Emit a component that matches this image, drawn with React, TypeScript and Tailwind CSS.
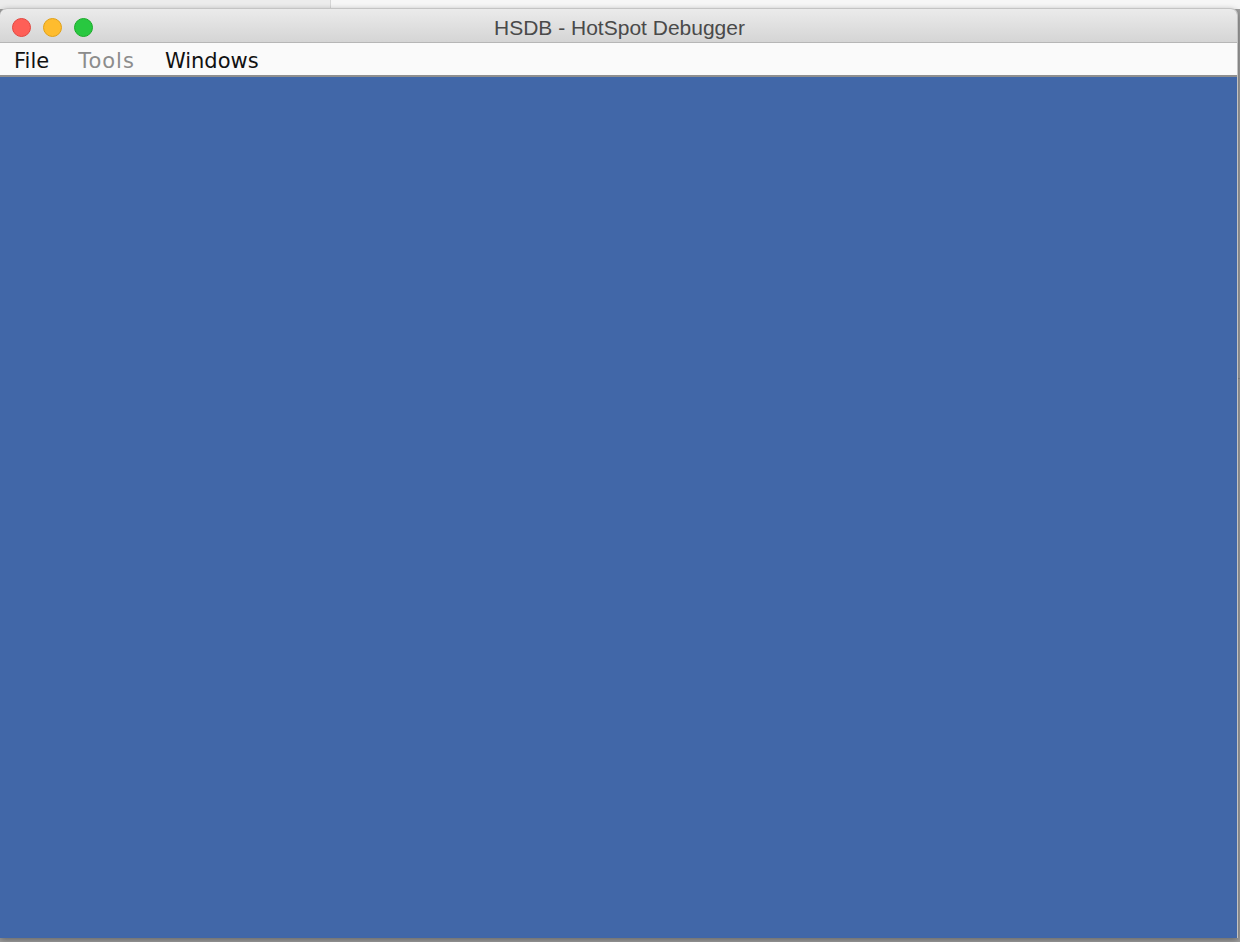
import React from 'react';

// Traffic-light buttons in the window title bar
const lights = [
  { fill: 'bg-[#fe5f57]', ring: 'border-[#e2463f]' },
  { fill: 'bg-[#febc2e]', ring: 'border-[#e1a116]' },
  { fill: 'bg-[#28c840]', ring: 'border-[#1aab29]' },
];

export default function App() {
  return (
    <div className="relative w-[1240px] h-[942px] overflow-hidden bg-[#9e9e9e] font-['Liberation_Sans',sans-serif]">
      {/* Desktop behind the window */}
      <div className="flex h-[9px]">
        <div className="w-[331px] bg-[#ececec] border-r border-[#d6d6d6]" />
        <div className="flex-1 bg-[#f6f6f6]" />
      </div>
      <div className="absolute right-0 top-[378px] w-[3px] h-[1px] bg-[#8a8a8a]" />

      {/* Window */}
      <div className="absolute left-0 top-[8px] w-[1238px] h-[930px] flex flex-col rounded-t-[7px] border-r border-t border-[#c4c4c4] overflow-hidden shadow-[0_2px_6px_rgba(0,0,0,0.35)]">
        {/* Title bar */}
        <div className="relative h-[34px] flex items-center bg-gradient-to-b from-[#ebebeb] to-[#d5d5d5] border-b border-[#b6b6b6]">
          <div className="flex items-center gap-[12px] pl-[12px] pt-[3px]">
            {lights.map((l, i) => (
              <span key={i} className={`w-[19px] h-[19px] rounded-full border ${l.fill} ${l.ring}`} />
            ))}
          </div>
          <div className="absolute inset-0 flex items-center justify-center text-[21px] text-[#4a4a4a] pt-[4px] pl-[2px]">
            HSDB - HotSpot Debugger
          </div>
        </div>

        {/* Menu bar */}
        <div className="h-[34px] flex items-center bg-[#fafafa] border-b-2 border-[#8f8f8f] font-['DejaVu_Sans',sans-serif] text-[21px] leading-none pt-[4px]">
          <span className="ml-[14px] text-[#111]">File</span>
          <span className="ml-[29px] text-[#8c8c8c] tracking-[1px]">Tools</span>
          <span className="ml-[30px] text-[#111]">Windows</span>
        </div>

        {/* Desktop pane */}
        <div className="flex-1 bg-[#4167a8]" />
      </div>
    </div>
  );
}
